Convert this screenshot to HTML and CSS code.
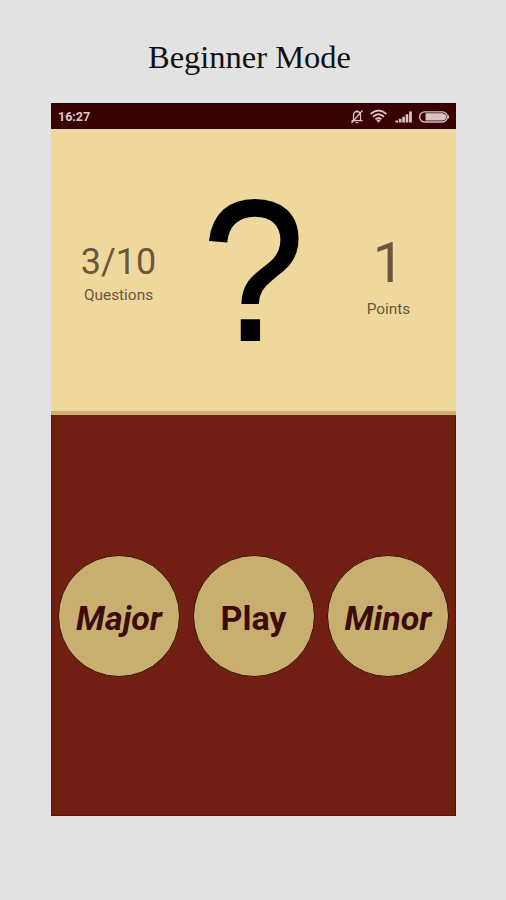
FILE: index.html
```html
<!DOCTYPE html>
<html lang="en"><head>
<meta charset="utf-8">
<meta name="viewport" content="width=device-width,initial-scale=1.0">
<title>Beginner Mode</title>
<link rel="stylesheet" href="styles.css">
</head>
<body>
<h1>Beginner Mode</h1>
<div id="phone">
  <div id="status">
    <span class="clock">16:27</span>
    <svg class="icons" width="102" height="18" viewBox="0 0 102 18">
      <!-- muted bell -->
      <g fill="none" stroke="#d9c4c4" stroke-width="1.3">
        <path d="M3.5 12.5V7.5Q3.5 3.5 7 3.5T10.5 7.5V12.5M1.5 12.7H12.5M5.8 14.6H8.2M7 2V3.5M12.5 2.5L1.5 15"/>
      </g>
      <!-- wifi -->
      <g fill="none" stroke="#d9c4c4" stroke-width="1.9">
        <path d="M20.6 6Q28.5 -.8 36.4 6M23 8.7Q28.5 4 34 8.7M25.5 11.3Q28.5 8.8 31.5 11.3"/>
      </g>
      <path d="M26.3 12.3Q28.5 10.8 30.7 12.3L28.5 14.8Z" fill="#d9c4c4"/>
      <!-- signal -->
      <path d="M45.5 12.4h2.6v2.1h-2.6zM48.9 10.8h2.6v3.7h-2.6zM52.3 8.7h2.6v5.8h-2.6zM55.7 6.3h2.6v8.2h-2.6zM59.1 3.5h2.8v11h-2.8z" fill="#d9c4c4"/>
      <!-- battery -->
      <rect x="69.6" y="3.8" width="27.8" height="10.2" rx="5.1" fill="none" stroke="#d9c4c4" stroke-width="1.3"/>
      <path d="M75.5 5.2H92.5Q96.2 5.7 96.2 8.9T92.5 12.6H75.5Z" fill="#d9c4c4"/>
      <path d="M98 6.8Q100.2 8.9 98 11Z" fill="#d9c4c4"/>
    </svg>
  </div>
  <div id="score">
    <div class="count questions"><b>3/10</b><span>Questions</span></div>
    <div class="mark">?</div>
    <div class="count points"><b>1</b><span>Points</span></div>
  </div>
  <div id="answers">
    <button class="chord">Major</button>
    <button class="play">Play</button>
    <button class="chord">Minor</button>
  </div>
</div>
</body></html>
```
FILE: styles.css
```css
*{ box-sizing:border-box; }
body{ margin:0; height:900px; background:#e2e2e2; font-family:Roboto,sans-serif; }
h1{ margin:0; padding-top:37px; height:103px; font:normal 32.5px/40px "Liberation Serif",serif; color:#111; text-align:center; padding-right:7px; }
#phone{ width:405px; height:713px; margin-left:51px; display:flex; flex-direction:column; }
#status{ height:26px; padding:0 4px 0 7px; display:flex; align-items:center; justify-content:space-between; background:#390003; border-top:1px solid #240002; }
.clock{ font-size:12.5px; font-weight:bold; color:#dccaca; }
#score{ height:286px; display:grid; grid-template-columns:1fr 1fr 1fr; background:#efd89e; border-bottom:4px solid #ccb072; }
.count{ display:flex; flex-direction:column; align-items:center; color:#6b573b; }
.count b{ font-weight:normal; }
.count span{ font-size:15.4px; line-height:20px; }
.questions{ padding-top:113px; }
.questions b{ font-size:36px; line-height:40px; margin-bottom:3px; }
.points{ padding-top:104px; }
.points b{ font-size:56px; line-height:60px; margin-bottom:6px; }
.mark{ font:196px/220px "Liberation Sans",sans-serif; padding-top:33px; color:#000; text-align:center; -webkit-text-stroke:2px #000; transform:scale(.935,1.02); }
#answers{ flex:1; padding:2px 6px 0; display:flex; align-items:center; justify-content:space-between; background:#701f12; border:1px solid #5f120c; border-top:0; }
button{ width:122px; height:122px; padding:3px 0 0; border:1.5px solid #351008; border-radius:50%; background:#c9af6f; color:#3d0c0a; font:bold 34px Roboto,sans-serif; }
.chord{ font-style:italic; }
```
